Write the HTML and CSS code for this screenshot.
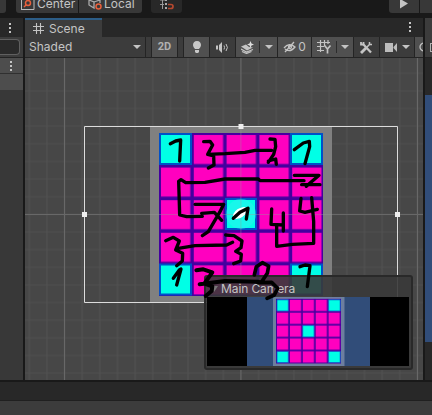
FILE: index.html
```html
<!DOCTYPE html>
<html lang="en">
<head>
<meta charset="utf-8">
<title>Scene</title>
<link rel="stylesheet" href="styles.css">
</head>
<body>
<header class="top">
  <div class="tool t-prev"></div>
  <div class="tool t-center">
    <svg width="14" height="14" viewBox="0 0 14 14" fill="none"><path d="M.5 0v9.500h12.500V0M0 9.500h13" stroke="#bbb"/><circle cx="7" cy="3" r="2.500" stroke="#e9603c" stroke-width="1.500"/><path d="M5 5L3 7" stroke="#e9603c" stroke-width="1.500"/></svg>
    <span>Center</span>
  </div>
  <div class="tool t-local">
    <svg width="15" height="14" viewBox="0 0 15 14" fill="none"><path d="M1 0v5l5 3V2L1 0M6 2l6-2v3" stroke="#aaa" stroke-width="1.300"/><circle cx="10.500" cy="6.500" r="2.500" stroke="#e9603c" stroke-width="1.500"/></svg>
    <span>Local</span>
  </div>
  <div class="tool t-snap">
    <svg width="14" height="11" viewBox="0 0 14 11" fill="none"><path d="M0 4.500h4M2.500 0v9M0 0h5" stroke="#999"/><path d="M5 0h2M6 3v2M6 7v2" stroke="#aaa" stroke-width="2"/><path d="M8 4.500h3q2 0 2 2t-2 2H8" stroke="#b5482f" stroke-width="1.700"/></svg>
  </div>
  <div class="tool t-play"><svg width="8" height="9" viewBox="0 0 8 9"><path d="M0 0V8.500L8 3.500 2 0z" fill="#c4c4c4"/></svg></div>
  <div class="tool t-pause"></div>
</header>

<main class="main">
  <aside class="left">
    <div class="head"><i class="dots"></i></div>
    <div class="searchbar"><div class="search"></div></div>
    <div class="row"><i class="dots"></i></div>
    <div class="row second"></div>
  </aside>

  <section class="scene">
    <div class="tabs">
      <div class="tab">
        <svg width="11" height="11" viewBox="0 0 11 11" stroke="#c4c4c4" stroke-width="1.100"><path d="M3.500 0v11M7.500 0v11M0 3.500h11M0 7.500h11"/></svg>
        <span>Scene</span>
      </div>
      <i class="dots"></i>
    </div>
    <div class="toolbar">
      <div class="btn shade"><span>Shaded</span><i class="arrow"></i></div>
      <div class="btn sliver"></div>
      <div class="btn on w25 two-d">2D</div>
      <div class="btn w5"></div>
      <div class="btn on w25"><svg width="10" height="13" viewBox="0 0 10 13"><path d="M5 0C2.300 0 1 2 1 4c0 2 1.500 3 2 4h4c.5-1 2-2 2-4 0-2-1.300-4-4-4zM3 9h4v2L6 12H4L3 11z" fill="#c8c8c8"/></svg></div>
      <div class="btn w25"><svg width="13" height="11" viewBox="0 0 13 11" fill="none" stroke="#c4c4c4"><path d="M0 3.500h2v4H0zM3 3l3-3v11L3 8z" fill="#c4c4c4" stroke="none"/><path d="M8 3.500q1 2 0 4M10 2q2.800 3.500 0 7"/></svg></div>
      <div class="btn on w40 fx"><svg width="13" height="13" viewBox="0 0 13 13" fill="none"><path d="M0 5.500L5 3.500 8 6l4 .5-6 3z" fill="#c4c4c4"/><path d="M0 8l5.500 3L12 8.500M1 10.500l4.500 2 5-2" stroke="#c4c4c4" stroke-width="1.200"/><path d="M9.500 0l1 2.500L13 3.500l-2.500 1-1 2.500-1-2.500L6 3.500l2.500-1z" fill="#ddd"/></svg><b></b><i class="arrow small"></i></div>
      <div class="btn on w33 eye"><svg width="14" height="12" viewBox="0 0 14 12" fill="none" stroke="#c4c4c4" stroke-width="1.300"><path d="M1 7q5-6 11-1-5 6-10 2M2 11L11 1"/><circle cx="7" cy="6" r="1.500"/></svg><span>0</span></div>
      <div class="btn on w40 grid"><svg width="15" height="14" viewBox="0 0 15 14" fill="none" stroke="#c4c4c4" stroke-width="1.200"><path d="M3.500 0v12M7.500 0v6M11 0v4M0 2.500h13M0 6.500h7M0 10.500h7"/><path d="M7.500 5.500L10.500 9l3-3.500M10.500 9v4.500" stroke-width="1.700"/></svg><b></b><i class="arrow small"></i></div>
      <div class="btn w25"><svg width="13" height="13" viewBox="0 0 13 13" fill="none" stroke="#c4c4c4"><path d="M3 3l8 8.500" stroke-width="2.200"/><path d="M1 1v2.500h2.500V1" stroke-width="1.800"/><path d="M1 12l5-5" stroke-width="2.800"/><path d="M6.500 6.500L10 3M9.500 1v2.500H12" stroke-width="1.500"/></svg></div>
      <div class="btn w34 cam"><svg width="12" height="9" viewBox="0 0 12 9"><path d="M0 0h8v9H0zM8.500 4L12 0v9L8.500 5z" fill="#bcbcbc"/></svg><i class="arrow small"></i></div>
      <div class="btn on last"><svg width="4" height="10" viewBox="0 0 4 10" fill="none"><circle cx="5" cy="5" r="4" stroke="#c4c4c4" stroke-width="1.300"/></svg></div>
    </div>

    <div class="canvas">
      <svg class="stage" width="398" height="322" viewBox="25 58 398 322">
        <defs>
          <pattern id="minor" x="20.500" y="64.400" width="17.640" height="17.640" patternUnits="userSpaceOnUse">
            <path d="M8.820 0v17.640M0 8.820h17.640" stroke="#505050" stroke-width="1.200"/>
          </pattern>
          <pattern id="cells" x="159" y="133" width="32.800" height="32.600" patternUnits="userSpaceOnUse">
            <rect width="33" height="33" fill="#44009f"/><rect x="2" y="2" width="29.300" height="29" fill="#ff00bf"/>
          </pattern>
        </defs>
        <rect x="25" y="58" width="398" height="322" fill="#474747"/>
        <rect x="25" y="58" width="398" height="322" fill="url(#minor)"/>
        <path d="M64.500 58v322M240.900 58v322M417.500 58v322M25 214.500h398" stroke="#686868"/>
        <rect x="150" y="127" width="182" height="175" fill="#808080"/>
        <rect x="159" y="133" width="164" height="163" fill="url(#cells)"/>
        <g fill="#00ffe6" stroke="#0050c8" stroke-width="2">
          <path d="M160 134h31v30h-31zM291 134h31v30h-31zM160 264.500h31v30h-31zM291 264.500h31v30h-31zM226 199h30v30h-30z"/>
        </g>
        <circle cx="241" cy="214" r="15" fill="#30efef" opacity=".5"/>
        <path d="M240.900 127v175M150 214.500h182" stroke="#999" opacity=".4"/>
        <path d="M84.500 126.500h313v176h-313z" fill="none" stroke="#dcdcdc"/>
        <path d="M82 212h5v5h-5zM395 212h5v5h-5zM238.500 124h5v5h-5z" fill="#eee"/>
      </svg>

      <div class="preview">
        <div class="title"><i class="arrow dim"></i><span>Main Camera</span></div>
        <div class="video">
          <svg width="123" height="69" viewBox="247 297 123 69">
            <defs><pattern id="mini" x="276" y="298.800" width="12.900" height="12.900" patternUnits="userSpaceOnUse"><rect width="13" height="13" fill="#44009f"/><rect x="1" y="1" width="11.200" height="11.200" fill="#ff00bf"/></pattern></defs>
            <rect x="247" y="297" width="123" height="69" fill="#314d79"/>
            <rect x="273" y="297" width="71.500" height="69" fill="#6d7f9f"/>
            <rect x="276" y="298.800" width="65" height="64.700" fill="url(#mini)"/>
            <path d="M277 299.800h11.300V311H277zM328.600 299.800h11.600V311h-11.600zM277 351.400h11.300v11.200H277zM328.600 351.400h11.600v11.200h-11.600zM302.700 325.600h11.400v11.300h-11.400z" fill="#00ffe6" stroke="#0060c8" stroke-width=".8"/>
          </svg>
        </div>
      </div>

      <svg class="ink" width="398" height="322" viewBox="25 58 398 322">
        <ellipse cx="240" cy="213" rx="8" ry="4.500" transform="rotate(-35 240 213)" fill="#fff"/>
        <g transform="translate(145 115) scale(.33333)" fill="none" stroke="#000" stroke-width="10" stroke-linecap="round" stroke-linejoin="round">
          <path d="M76 86L92 78 107 75 104 138"/>
          <path d="M176 80L195 79 203 90 188 118 206 123 207 150 190 159M188 118L240 116 300 112 330 106 380 106"/>
          <path d="M477 197L345 197 340 192 240 192 180 202 122 203 108 194 101 199 104 300 125 305 172 304"/>
          <path d="M150 268L236 268 225 290 190 350 172 362M170 295L208 292 230 316"/>
          <path d="M375 72L390 73 392 95 386 118 370 142M370 138L392 132 394 148"/>
          <path d="M448 104L475 84 493 79 494 95 480 146"/>
          <path d="M448 181L522 181 484 214M470 209L525 209"/>
          <path d="M265 310L285 292 309 280 304 312"/>
          <path d="M380 282L378 328 414 330M415 294L415 348"/>
          <path d="M395 330L395 394 442 388 506 385 506 320 500 248M468 250L464 288 480 292 517 283"/>
          <path d="M62 377L85 367 103 378 92 405 113 415 112 438 95 452M100 400L150 392 245 390 263 382"/>
          <path d="M242 360L267 362 291 378 288 398 272 409 289 418 287 438 266 446"/>
          <path d="M85 490L103 465 108 462 95 510"/>
          <path d="M154 466L175 463 202 472 178 506 202 514 200 528 182 543M164 508L240 498 340 500" stroke-width="12"/>
          <path d="M328 480L334 455 352 443 371 453 367 475 350 500 338 503 380 502 398 520 388 540 366 550" stroke-width="11"/>
          <path d="M465 455L480 450 495 452 487 515"/>
        </g>
      </svg>
    </div>
  </section>

  <aside class="right">
    <div class="r-tab"></div>
    <div class="r-bar"><i></i></div>
    <div class="r-pad"></div>
    <div class="r-view"></div>
    <div class="r-end"></div>
  </aside>
</main>
<footer class="bottom"><div class="strip"></div><div class="panel"></div></footer>
</body>
</html>
```
FILE: styles.css
```css
* { box-sizing: border-box; }
body {
  margin: 0;
  width: 432px;
  height: 415px;
  overflow: hidden;
  display: flex;
  flex-direction: column;
  background: #191919;
  color: #c4c4c4;
  font: 12px/14px Inter, "Liberation Sans", sans-serif;
}
svg { display: block; flex: none; }

.top { height: 18px; display: flex; flex: none; }
.tool { height: 13px; background: #383838; display: flex; overflow: visible; }
.tool span { line-height: 14px; margin-top: -3px; }
.t-prev { width: 6px; margin-right: 10px; border-radius: 0 0 3px 0; }
.t-center { width: 62px; padding-left: 5px; gap: 2px; margin-right: 1px; border-radius: 0 0 0 3px; }
.t-local { width: 63px; padding-left: 9px; gap: 1px; margin-right: 9px; border-radius: 0 0 3px 0; }
.t-snap { width: 31px; padding-left: 9px; background: #282828; border-radius: 0 0 3px 3px; margin-right: 207px; }
.t-play { width: 30px; padding-left: 11px; border-radius: 0 0 0 3px; margin-right: 1px; }
.t-pause { flex: 1; }

.main { height: 362px; display: flex; flex: none; gap: 2px; }
.dots {
  width: 2px;
  height: 10px;
  background: repeating-linear-gradient(#c4c4c4 0 2px, transparent 2px 4px);
}

.left { width: 23px; background: #383838; }
.head { height: 19px; background: #282828; padding: 5px 0 0 9px; }
.head .dots, .row .dots { display: block; }
.searchbar { height: 21px; background: #3c3c3c; padding-top: 2px; border-bottom: 1px solid #232323; }
.search { width: 20px; height: 16px; background: #2a2a2a; border: 1px solid #606060; border-left: 0; border-radius: 0 4px 4px 0; }
.row { height: 16px; background: #4d4d4d; border-bottom: 1px solid #303030; padding: 3px 0 0 10px; }
.second { border: 0; }

.scene { width: 398px; }
.tabs { height: 19px; background: #282828; display: flex; justify-content: space-between; }
.tab { width: 77px; background: #3c3c3c; border-top: 2px solid #2c5d87; display: flex; align-items: center; gap: 5px; padding-left: 8px; }
.tabs > .dots { margin: 4px 12px 0 0; }
.toolbar { height: 21px; background: #242424; display: flex; gap: 1px; padding-bottom: 1px; }
.btn { background: #3c3c3c; display: flex; align-items: center; justify-content: center; flex: none; height: 20px; }
.on { background: #505050; }
.shade { width: 120px; justify-content: space-between; padding: 0 4px; }
.sliver { width: 5px; }
.w5 { width: 5px; }
.w25 { width: 25px; }
.w40 { width: 41px; }
.w33 { width: 33px; }
.w34 { width: 34px; }
.two-d { font: 700 11px/14px Roboto, sans-serif; color: #b0b0b0; }
.arrow { width: 0; height: 0; border: 4px solid transparent; border-top: 4px solid #c4c4c4; border-bottom: 0; }
.btn b { width: 1px; height: 12px; background: #2c2c2c; }
.fx, .grid { justify-content: space-between; padding: 0 4px 0 5px; }
.eye { gap: 1px; }
.cam { gap: 5px; }
.last { width: auto; flex: 1; justify-content: flex-end; }

.canvas { height: 322px; position: relative; overflow: hidden; }
.ink { position: absolute; inset: 0; }
.preview {
  position: absolute;
  left: 179px;
  top: 217px;
  width: 209px;
  height: 95px;
  border: 2px solid #292929;
  border-radius: 3px;
  background: rgba(56, 56, 56, .9);
  padding: 0 2px 1px 1px;
}
.title { height: 20px; display: flex; align-items: center; gap: 3px; padding: 4px 0 0 3px; letter-spacing: -.1px; }
.dim { border-top-color: #777; border-top-width: 6px; }
.video { height: 69px; background: #000; padding-left: 40px; }

.right { width: 7px; display: flex; flex-direction: column; background: #282828; }
.r-tab { height: 19px; background: #3c3c3c; }
.r-bar { height: 21px; background: #3c3c3c; border-bottom: 1px solid #232323; padding: 6px 0 0 5px; }
.r-bar i { display: block; height: 9px; border: 1px solid #b0b0b0; border-right: 0; }
.r-pad { height: 37px; }
.r-view { height: 247px; background: #314d79; }
.r-end { flex: 1; }

.bottom { flex: 1; padding-top: 2px; }
.strip { height: 19px; background: #282828; border-bottom: 1px solid #202020; }
.panel { height: 14px; background: #3c3c3c; }
```
